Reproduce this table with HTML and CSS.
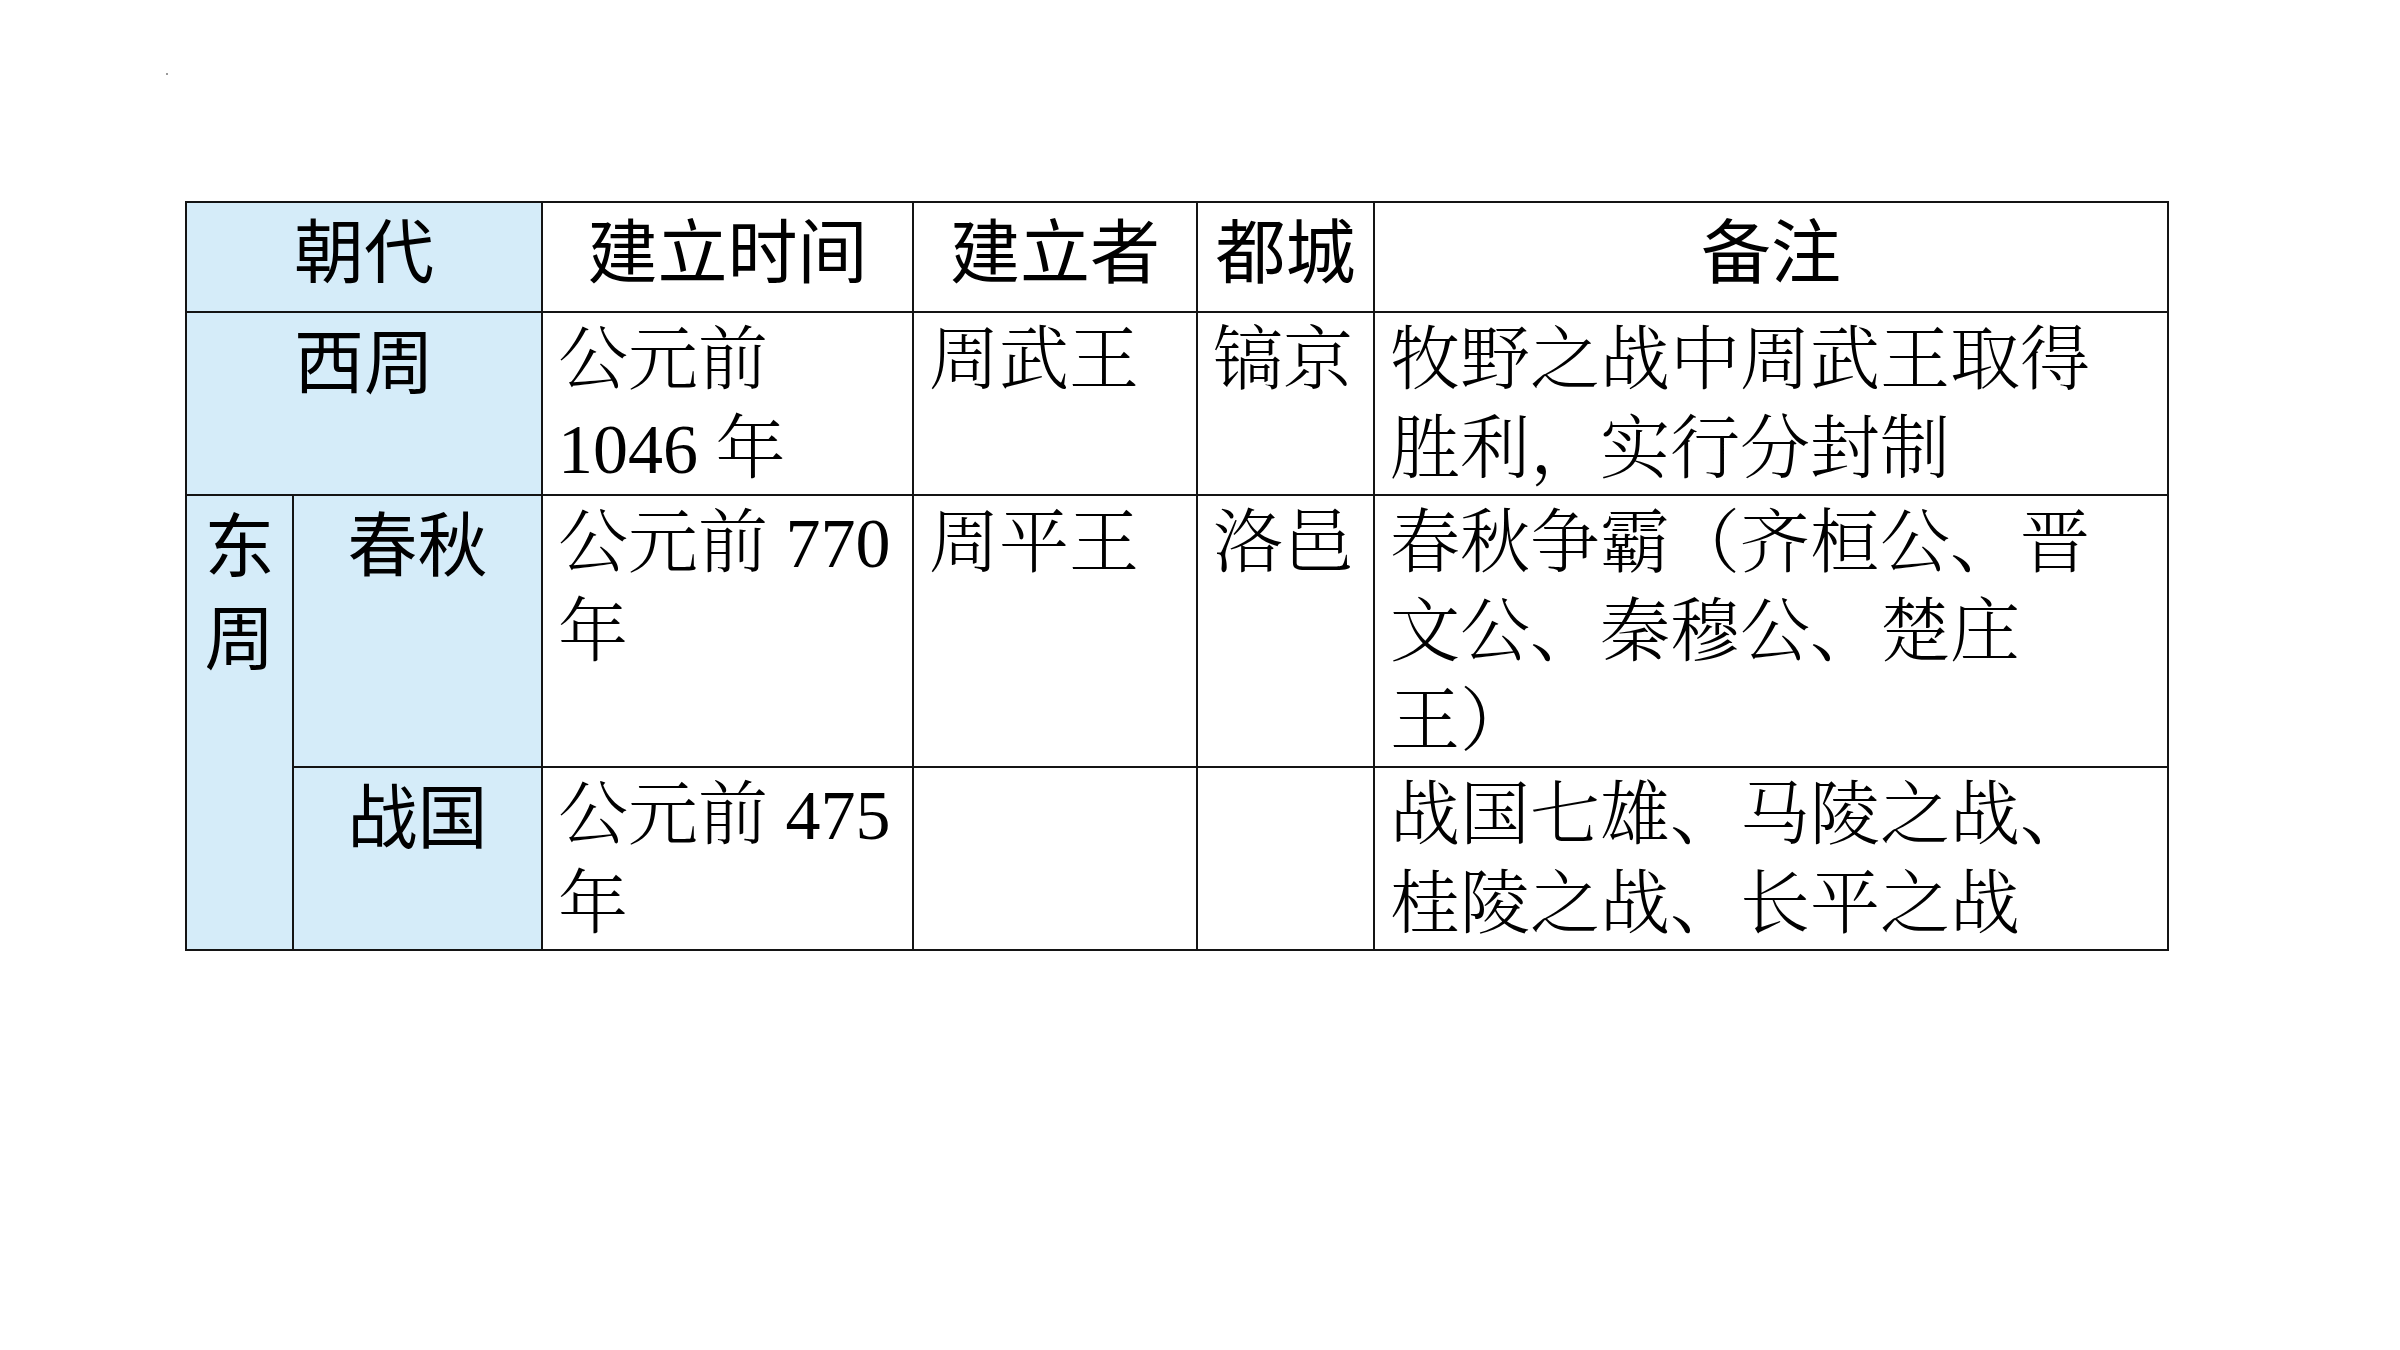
FILE: index.html
```html
<!DOCTYPE html>
<html lang="zh-CN">
<head>
<meta charset="utf-8">
<title>周朝</title>
<link rel="stylesheet" href="styles.css">
</head>
<body>
<div class="slide">
  <span class="speck"></span>
  <table class="dyn">
    <colgroup>
      <col class="c1"><col class="c2"><col class="c3"><col class="c4"><col class="c5"><col class="c6">
    </colgroup>
    <tr class="r-head">
      <th class="blue" colspan="2">朝代</th>
      <th>建立时间</th>
      <th>建立者</th>
      <th>都城</th>
      <th>备注</th>
    </tr>
    <tr class="r-xz">
      <td class="blue sans" colspan="2">西周</td>
      <td>公元前 1046 年</td>
      <td>周武王</td>
      <td>镐京</td>
      <td>牧野之战中周武王取得胜利，实行分封制</td>
    </tr>
    <tr class="r-cq">
      <td class="blue sans dz" rowspan="2">东周</td>
      <td class="blue sans">春秋</td>
      <td>公元前 770 年</td>
      <td>周平王</td>
      <td>洛邑</td>
      <td>春秋争霸（齐桓公、晋文公、秦穆公、楚庄王）</td>
    </tr>
    <tr class="r-zg">
      <td class="blue sans">战国</td>
      <td>公元前 475 年</td>
      <td></td>
      <td></td>
      <td>战国七雄、马陵之战、桂陵之战、长平之战</td>
    </tr>
  </table>
</div>
</body>
</html>
```
FILE: styles.css
```css
html, body {
  margin: 0;
  padding: 0;
  background: #ffffff;
}

.slide {
  position: relative;
  width: 2400px;
  height: 1350px;
  box-sizing: border-box;
  padding: 201px 0 0 185px;
  background: #ffffff;
}

.speck {
  position: absolute;
  left: 166px;
  top: 73px;
  width: 2px;
  height: 2px;
  background: #9a9a9a;
}

.dyn {
  border-collapse: collapse;
  table-layout: fixed;
  width: 1982px;
  text-spacing-trim: space-all;
}

.c1 { width: 107px; }
.c2 { width: 249px; }
.c3 { width: 371px; }
.c4 { width: 284px; }
.c5 { width: 177px; }
.c6 { width: 794px; }

.dyn th,
.dyn td {
  border: 2px solid #141414;
  vertical-align: top;
}

.dyn td {
  padding: 3px 14px 0 15px;
  font-family: "Liberation Serif", "Noto Serif CJK SC", "Noto Sans CJK SC", serif;
  font-weight: 300;
  font-size: 70px;
  line-height: 89px;
  color: #000000;
  text-align: left;
  text-spacing-trim: space-all;
}

.dyn th,
.dyn td.sans {
  padding: 0 6px;
  font-family: "Noto Sans CJK SC", "Noto Sans", sans-serif;
  font-weight: 400;
  font-size: 70px;
  line-height: 90px;
  color: #000000;
  text-align: center;
}

.dyn td.dz {
  line-height: 92px;
}

.blue {
  background: #d5ecf9;
}

.r-head { height: 110px; }
.r-xz { height: 182px; }
.r-cq { height: 272px; }
.r-zg { height: 183px; }
```
